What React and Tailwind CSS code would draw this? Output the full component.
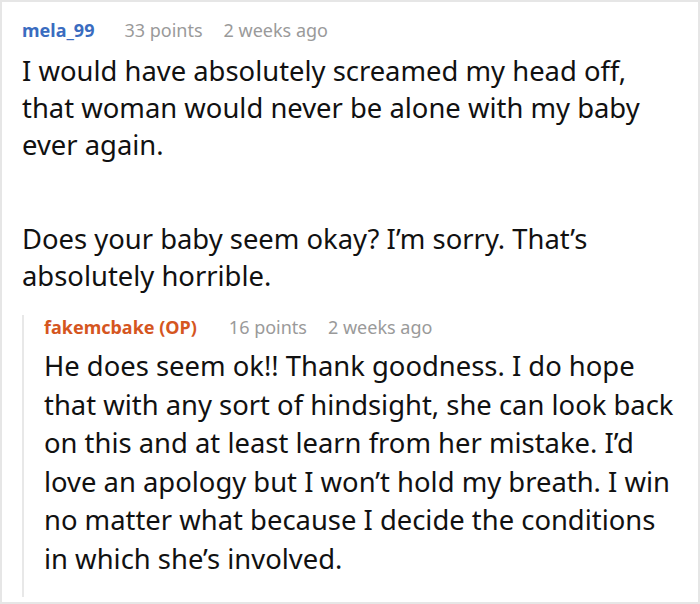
import React from 'react';

const font = { fontFamily: '"Noto Sans", "Open Sans", sans-serif' };

function Meta({ name, nameClass, points, time, gap }) {
    return (
        <div className="flex items-baseline text-[18px] leading-[24px]">
            <span className={`font-bold ${nameClass}`}>{name}</span>
            <span className={`${gap} text-[#9a9a9a]`}>{points} points</span>
            <span className="ml-[21px] text-[#9a9a9a]">{time}</span>
        </div>
    );
}

export default function App() {
    return (
        <div className="w-[700px] h-[604px] bg-white border-2 border-[#e6e6e6] overflow-hidden" style={font}>
            <div className="pl-[20px] pr-[22px] pt-[16px]">
                <Meta name="mela_99" nameClass="text-[#3a6cc0]" points="33" time="2 weeks ago" gap="ml-[30px]" />
                <div className="text-[27.4px] leading-[37px] text-[#111] mt-[10px]">
                    <p>I would have absolutely screamed my head off, that woman would never be alone with my baby ever again.</p>
                    <p className="mt-[57px]">Does your baby seem okay? I’m sorry. That’s absolutely horrible.</p>
                </div>

                <div className="mt-[21px] border-l-2 border-[#e8e8e8] pl-[20px] pb-[19px]">
                    <Meta name="fakemcbake (OP)" nameClass="text-[#d5561f]" points="16" time="2 weeks ago" gap="ml-[32px]" />
                    <p className="text-[27.4px] leading-[38.5px] text-[#111] mt-[8px]">
                        He does seem ok!! Thank goodness. I do hope that with any sort of hindsight, she can look back on this and at least learn from her mistake. I’d love an apology but I won’t hold my breath. I win no matter what because I decide the conditions in which she’s involved.
                    </p>
                </div>
            </div>
        </div>
    );
}
